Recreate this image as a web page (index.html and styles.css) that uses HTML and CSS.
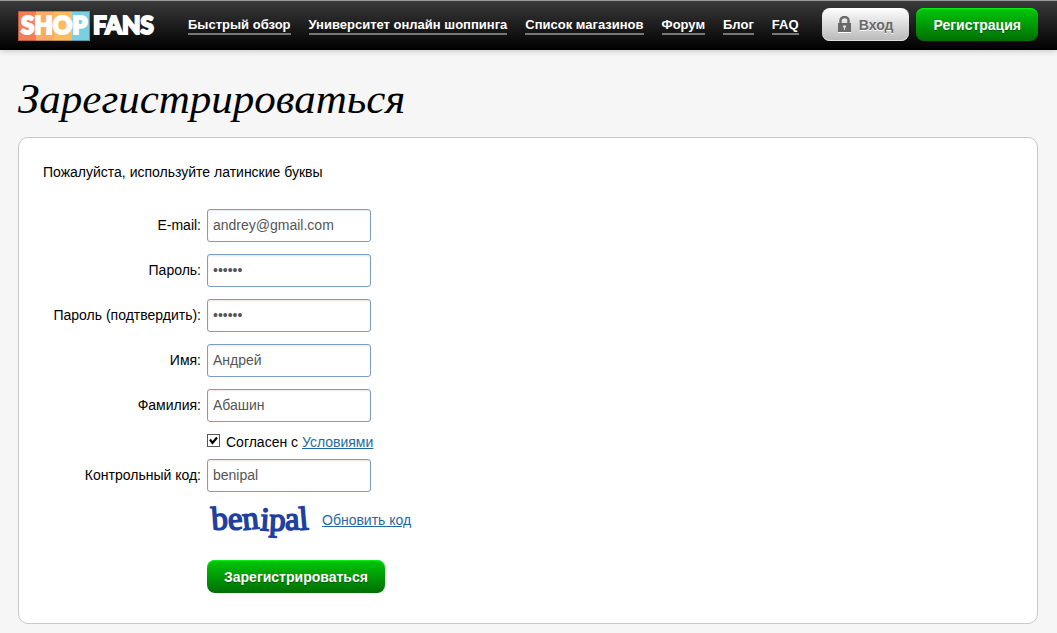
FILE: index.html
```html
<!DOCTYPE html>
<html lang="ru">
<head>
    <meta charset="UTF-8">
    <meta name="viewport" content="width=device-width, initial-scale=1.0">
    <title>Shopfans - Зарегистрироваться</title>
    <link rel="stylesheet" href="styles.css">
</head>

<body>

<header class="header">
    <a class="logo" href="#" aria-label="Shopfans">
        <svg width="140" height="30" viewBox="0 0 140 30">
            <rect x="0" y="0" width="18" height="30" fill="#f47c57"/>
            <rect x="18" y="0" width="18" height="30" fill="#fbab68"/>
            <rect x="36" y="0" width="18" height="30" fill="#fdbb62"/>
            <rect x="54" y="0" width="18" height="30" fill="#7acfe2"/>
            <rect x="0.5" y="0.5" width="71" height="29" fill="none" stroke="#000" stroke-opacity="0.25"/>
            <text class="logo-text" x="3" y="23">SHOP</text>
            <text class="logo-text" x="75" y="23">FANS</text>
        </svg>
    </a>
    <nav class="nav">
        <a href="#">Быстрый обзор</a>
        <a href="#">Университет онлайн шоппинга</a>
        <a href="#">Список магазинов</a>
        <a href="#">Форум</a>
        <a href="#">Блог</a>
        <a href="#">FAQ</a>
    </nav>
    <div class="account">
        <button type="button" class="button button-gray">
            <svg width="13" height="17" viewBox="0 0 13 17">
                <path d="M2.5 8V4.5a4 3.5 0 0 1 8 0V8" fill="none" stroke="#696969" stroke-width="2.4"/>
                <rect x="0" y="7" width="13" height="9" fill="#696969"/>
                <path d="M0 16.5h13" stroke="#fff"/>
                <path d="M5 9.5h3v2h-1v2.5h-1v-2.5h-1z" fill="#ddd"/>
            </svg>
            Вход
        </button>
        <button type="button" class="button button-green">Регистрация</button>
    </div>
</header>

<main class="content">
    <h1>Зарегистрироваться</h1>

    <form class="panel">
        <p class="hint">Пожалуйста, используйте латинские буквы</p>

        <div class="row">
            <label for="email">E-mail:</label>
            <input type="text" id="email" value="andrey@gmail.com">
        </div>
        <div class="row">
            <label for="password">Пароль:</label>
            <input type="password" id="password" value="123456">
        </div>
        <div class="row">
            <label for="passwordConfirm">Пароль (подтвердить):</label>
            <input type="password" id="passwordConfirm" value="123456">
        </div>
        <div class="row">
            <label for="firstName">Имя:</label>
            <input type="text" id="firstName" value="Андрей">
        </div>
        <div class="row">
            <label for="lastName">Фамилия:</label>
            <input type="text" id="lastName" value="Абашин">
        </div>
        <div class="agree">
            <input type="checkbox" id="agree" checked>
            <label for="agree">Согласен с <a href="#">Условиями</a></label>
        </div>
        <div class="row">
            <label for="code">Контрольный код:</label>
            <input type="text" id="code" value="benipal">
        </div>
        <div class="captcha">
            <svg width="106" height="42" viewBox="0 0 106 42" role="img" aria-label="benipal">
                <text class="captcha-text" x="5" y="31" rotate="-4 -4 -6 4 3 -3 -5">benipal</text>
            </svg>
            <a href="#">Обновить код</a>
        </div>
        <button type="submit" class="button button-green submit">Зарегистрироваться</button>
    </form>
</main>

</body>
</html>
```
FILE: styles.css
```css
* {
    box-sizing: border-box;
}

body {
    font-family: "Liberation Sans", Arial, sans-serif;
    font-size: 14px;
    line-height: 18px;
    margin: 0;
    color: #000;
    background: #f6f6f6;
}

a {
    color: #1f6ba0;
}

/* Top bar */
.header {
    display: flex;
    align-items: center;
    height: 50px;
    padding: 0 19px 0 18px;
    border-top: 1px solid #999;
    background: linear-gradient(#3a3a3a, #000);
    box-shadow: 0 1px 6px rgba(0, 0, 0, 0.2);
}

.logo {
    display: flex;
    margin-right: 30px;
}

.logo svg {
    overflow: visible;
}

.logo-text {
    font-family: Lato, sans-serif;
    font-size: 24px;
    font-weight: 900;
    fill: #fff;
    stroke: #fff;
    stroke-width: 2px;
}

.nav {
    display: flex;
    gap: 18px;
}

.nav a {
    padding-top: 1px;
    color: #fff;
    font-size: 13px;
    font-weight: bold;
    line-height: 16px;
    text-decoration: none;
    white-space: nowrap;
    border-bottom: 2px solid #777;
}

.account {
    display: flex;
    gap: 7px;
    padding-bottom: 2px;
    margin-left: auto;
}

/* Buttons */
.button {
    display: flex;
    align-items: center;
    justify-content: center;
    height: 33px;
    padding: 0 17px;
    border: none;
    border-radius: 8px;
    font-family: inherit;
    font-size: 14px;
    font-weight: bold;
    cursor: pointer;
}

.button-green {
    color: #fff;
    background: linear-gradient(#00c80a, #006e04);
    box-shadow: inset 0 1px 0 #00f010;
    text-shadow: 0 1px 1px rgba(0, 0, 0, 0.4);
}

.button-gray {
    gap: 8px;
    padding: 0 16px;
    color: #696969;
    background: linear-gradient(#fff, #b8b8b8);
    box-shadow: inset 0 -1px 0 #ddd;
    text-shadow: 0 1px 0 #fff;
}

/* Page */
.content {
    padding: 25px 19px 9px 18px;
}

h1 {
    margin: 0 0 14px;
    font-family: "Liberation Serif", Georgia, serif;
    font-size: 43px;
    font-style: italic;
    font-weight: normal;
    line-height: 48px;
}

.panel {
    padding: 25px 24px 30px;
    border: 1px solid #c8c8c8;
    border-radius: 10px;
    background: #fff;
}

.hint {
    margin: 0 0 28px;
}

.row {
    display: flex;
    align-items: center;
    gap: 6px;
    margin-bottom: 12px;
}

.row label {
    width: 158px;
    padding-bottom: 2px;
    text-align: right;
}

.row input {
    width: 164px;
    height: 33px;
    padding: 0 5px 2px;
    border: 1px solid #7d9dbd;
    border-radius: 3px;
    color: #555;
    font-family: inherit;
    font-size: 14px;
    box-shadow: inset 0 1px 2px rgba(0, 0, 0, 0.1);
}

.agree {
    display: flex;
    align-items: flex-start;
    gap: 6px;
    margin: -1px 0 8px 164px;
}

.agree input {
    appearance: none;
    width: 13px;
    height: 13px;
    margin: 1px 0 0;
    border: 1px solid #555;
    background: #fff;
}

.agree input:checked {
    background: url("data:image/svg+xml,%3Csvg xmlns='http://www.w3.org/2000/svg' viewBox='0 0 11 11'%3E%3Cpath d='M2 4.5L4.5 8L9 2.5' fill='none' stroke='%23000' stroke-width='2.2'/%3E%3C/svg%3E") #fff;
}

.captcha {
    display: flex;
    align-items: center;
    gap: 9px;
    margin: -5px 0 19px 164px;
}

.captcha-text {
    font-family: "Liberation Serif", serif;
    font-size: 33px;
    fill: #2040a0;
    stroke: #2040a0;
    stroke-width: 1.5px;
}

.submit {
    margin-left: 164px;
}
```
